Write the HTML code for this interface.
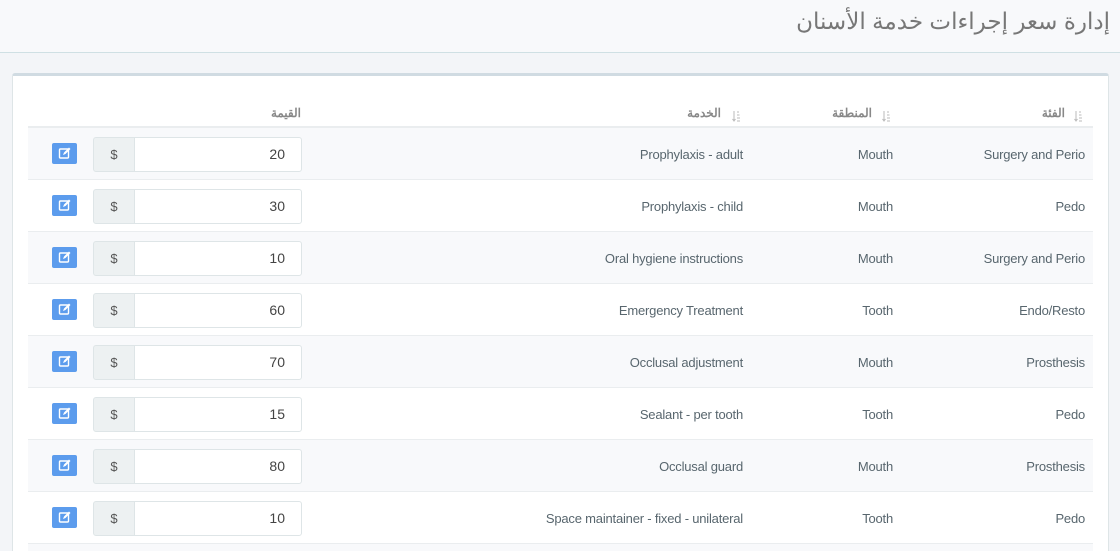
<!DOCTYPE html>
<html style="width:1120px;height:551px;overflow:hidden"><head><meta charset="utf-8"><style>
*{margin:0;padding:0;box-sizing:border-box}
body{width:1120px;height:551px;overflow:hidden;background:#f3f5f8;font-family:"Liberation Sans","Noto Sans CJK SC",sans-serif;color:#58666e;position:relative}
.hdr{position:absolute;left:0;top:0;width:1120px;height:53px;background:#f8f9fb;border-bottom:1px solid #cfe0e4}
.hdr h1{position:absolute;right:10px;top:8px;font-size:23px;font-weight:normal;color:#777;direction:rtl}
.card{position:absolute;left:12px;top:73px;width:1097px;height:500px;background:#fff;border:1px solid #dee5e7;border-top:3px solid #d0dbe2;border-radius:3px}
.th{position:absolute;top:106px;font-size:12px;font-weight:bold;color:#888;direction:rtl}
.hline{position:absolute;left:28px;top:126px;width:1065px;height:2px;background:#eaedef}
.row{position:absolute;left:28px;width:1065px;height:52px;border-bottom:1px solid #eaedef}
.row.s{background:#f8f9fb}
.c{position:absolute;top:19px;font-size:13px;color:#58666e;text-align:right;white-space:nowrap;letter-spacing:-0.2px}
.btn{position:absolute;left:24px;top:15px;width:25px;height:21px;background:#5c9ced;border-radius:2px}
.add{position:absolute;left:65px;top:9px;width:42px;height:35px;background:#edf1f2;border:1px solid #dee5e7;border-radius:3px 0 0 3px;text-align:center;line-height:33px;font-size:13px;color:#555}
.inp{position:absolute;left:106px;top:9px;width:168px;height:35px;background:#fff;border:1px solid #dee5e7;border-radius:0 3px 3px 0;text-align:right;padding-right:16px;line-height:33px;font-size:14px;color:#444}
.sort{position:absolute;top:110px;width:8px;height:12px;z-index:5}
</style></head><body>
<div class="hdr"><h1>إدارة سعر إجراءات خدمة الأسنان</h1></div>
<div class="card"></div>
<div class="th" style="right:55px">الفئة</div>
<div class="th" style="right:248px">المنطقة</div>
<div class="th" style="right:399px">الخدمة</div>
<div class="th" style="right:819px">القيمة</div>
<div class="hline"></div>
<div class="row s" style="top:128px"><div class="btn"><svg width="25" height="21" viewBox="0 0 25 21"><rect x="7.5" y="6" width="9" height="9" rx="1" fill="none" stroke="#fff" stroke-width="1.4"/><path d="M11 12l1-2.5 5-5 1.5 1.5-5 5z" fill="#fff"/></svg></div><div class="add">$</div><div class="inp">20</div><div class="c" style="right:350px">Prophylaxis - adult</div><div class="c" style="right:200px">Mouth</div><div class="c" style="right:8px">Surgery and Perio</div></div>
<div class="row" style="top:180px"><div class="btn"><svg width="25" height="21" viewBox="0 0 25 21"><rect x="7.5" y="6" width="9" height="9" rx="1" fill="none" stroke="#fff" stroke-width="1.4"/><path d="M11 12l1-2.5 5-5 1.5 1.5-5 5z" fill="#fff"/></svg></div><div class="add">$</div><div class="inp">30</div><div class="c" style="right:350px">Prophylaxis - child</div><div class="c" style="right:200px">Mouth</div><div class="c" style="right:8px">Pedo</div></div>
<div class="row s" style="top:232px"><div class="btn"><svg width="25" height="21" viewBox="0 0 25 21"><rect x="7.5" y="6" width="9" height="9" rx="1" fill="none" stroke="#fff" stroke-width="1.4"/><path d="M11 12l1-2.5 5-5 1.5 1.5-5 5z" fill="#fff"/></svg></div><div class="add">$</div><div class="inp">10</div><div class="c" style="right:350px">Oral hygiene instructions</div><div class="c" style="right:200px">Mouth</div><div class="c" style="right:8px">Surgery and Perio</div></div>
<div class="row" style="top:284px"><div class="btn"><svg width="25" height="21" viewBox="0 0 25 21"><rect x="7.5" y="6" width="9" height="9" rx="1" fill="none" stroke="#fff" stroke-width="1.4"/><path d="M11 12l1-2.5 5-5 1.5 1.5-5 5z" fill="#fff"/></svg></div><div class="add">$</div><div class="inp">60</div><div class="c" style="right:350px">Emergency Treatment</div><div class="c" style="right:200px">Tooth</div><div class="c" style="right:8px">Endo/Resto</div></div>
<div class="row s" style="top:336px"><div class="btn"><svg width="25" height="21" viewBox="0 0 25 21"><rect x="7.5" y="6" width="9" height="9" rx="1" fill="none" stroke="#fff" stroke-width="1.4"/><path d="M11 12l1-2.5 5-5 1.5 1.5-5 5z" fill="#fff"/></svg></div><div class="add">$</div><div class="inp">70</div><div class="c" style="right:350px">Occlusal adjustment</div><div class="c" style="right:200px">Mouth</div><div class="c" style="right:8px">Prosthesis</div></div>
<div class="row" style="top:388px"><div class="btn"><svg width="25" height="21" viewBox="0 0 25 21"><rect x="7.5" y="6" width="9" height="9" rx="1" fill="none" stroke="#fff" stroke-width="1.4"/><path d="M11 12l1-2.5 5-5 1.5 1.5-5 5z" fill="#fff"/></svg></div><div class="add">$</div><div class="inp">15</div><div class="c" style="right:350px">Sealant - per tooth</div><div class="c" style="right:200px">Tooth</div><div class="c" style="right:8px">Pedo</div></div>
<div class="row s" style="top:440px"><div class="btn"><svg width="25" height="21" viewBox="0 0 25 21"><rect x="7.5" y="6" width="9" height="9" rx="1" fill="none" stroke="#fff" stroke-width="1.4"/><path d="M11 12l1-2.5 5-5 1.5 1.5-5 5z" fill="#fff"/></svg></div><div class="add">$</div><div class="inp">80</div><div class="c" style="right:350px">Occlusal guard</div><div class="c" style="right:200px">Mouth</div><div class="c" style="right:8px">Prosthesis</div></div>
<div class="row" style="top:492px"><div class="btn"><svg width="25" height="21" viewBox="0 0 25 21"><rect x="7.5" y="6" width="9" height="9" rx="1" fill="none" stroke="#fff" stroke-width="1.4"/><path d="M11 12l1-2.5 5-5 1.5 1.5-5 5z" fill="#fff"/></svg></div><div class="add">$</div><div class="inp">10</div><div class="c" style="right:350px">Space maintainer - fixed - unilateral</div><div class="c" style="right:200px">Tooth</div><div class="c" style="right:8px">Pedo</div></div>
<div class="row s" style="top:544px;height:7px;border:none"></div>
<svg class="sort" style="left:1074px" viewBox="0 0 8 12"><path d="M2 1v10M0.5 9l1.5 2 1.5-2M5 2h2M5 5h2.5M5 8h3M5 11h3" stroke="#bbb" stroke-width="1" fill="none"/></svg>
<svg class="sort" style="left:882px" viewBox="0 0 8 12"><path d="M2 1v10M0.5 9l1.5 2 1.5-2M5 2h2M5 5h2.5M5 8h3M5 11h3" stroke="#bbb" stroke-width="1" fill="none"/></svg>
<svg class="sort" style="left:732px" viewBox="0 0 8 12"><path d="M2 1v10M0.5 9l1.5 2 1.5-2M5 2h2M5 5h2.5M5 8h3M5 11h3" stroke="#bbb" stroke-width="1" fill="none"/></svg>
</body></html>
